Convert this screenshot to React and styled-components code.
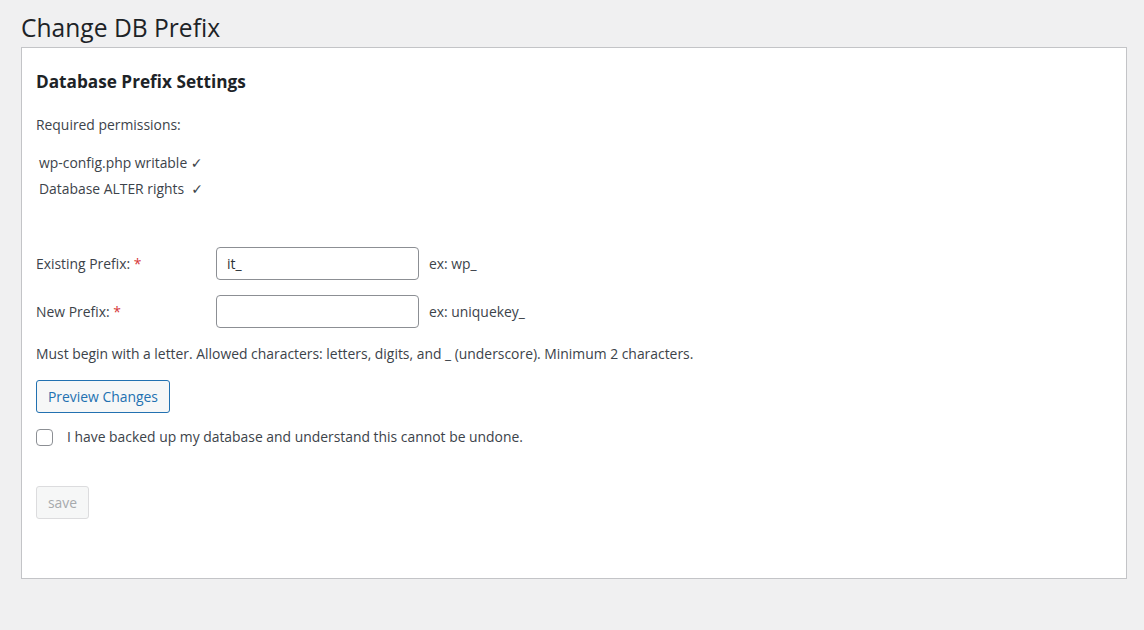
import React, { useState } from "react";
import styled, { createGlobalStyle } from "styled-components";

const GlobalStyle = createGlobalStyle`
  html, body {
    margin: 0;
    padding: 0;
    background: #f0f0f1;
  }
  body {
    font-family: "Open Sans", "Noto Sans", "DejaVu Sans", sans-serif;
    font-size: 13.9px;
    color: #3c434a;
  }
`;

const Wrap = styled.div`
  padding: 13px 17px 0 21px;
`;

const PageTitle = styled.h1`
  margin: 0 0 4px;
  font-size: 24.6px;
  font-weight: 400;
  line-height: 30px;
  color: #1d2327;
`;

const Panel = styled.div`
  background: #fff;
  border: 1px solid #c3c4c7;
  padding: 0 14px 59px;
`;

const SectionTitle = styled.h2`
  margin: 22px 0 0;
  font-size: 17.2px;
  font-weight: 700;
  line-height: 24px;
  color: #1d2327;
`;

const Text = styled.p`
  margin: ${({ $top }) => $top || 0}px 0 0;
  line-height: 20px;
`;

const PermList = styled.ul`
  list-style: none;
  margin: 15px 0 0;
  padding: 0 0 0 3px;
`;

const PermItem = styled.li`
  line-height: 26px;
  white-space: pre;
`;

const Check = styled.span`
  font-family: "DejaVu Sans", sans-serif;
  font-size: 14px;
`;

const FormRow = styled.div`
  display: flex;
  align-items: center;
  margin-top: ${({ $top }) => $top}px;
`;

const Label = styled.label`
  width: 180px;
  flex: none;
`;

const Required = styled.span`
  color: #d63638;
`;

const Input = styled.input`
  box-sizing: border-box;
  width: 203px;
  height: 33px;
  margin: 0 10px 0 0;
  padding: 0 10px;
  border: 1px solid #8c8f94;
  border-radius: 4px;
  background: #fff;
  font-family: inherit;
  font-size: 14px;
  color: #2c3338;
  outline: none;
`;

const Button = styled.button`
  display: block;
  box-sizing: border-box;
  height: 33px;
  margin-top: ${({ $top }) => $top}px;
  padding: 0 11px;
  border-radius: 3px;
  font-family: inherit;
  font-size: 13.9px;
  cursor: pointer;
  background: #f6f7f7;
  border: 1px solid ${({ disabled }) => (disabled ? "#dcdcde" : "#2271b1")};
  color: ${({ disabled }) => (disabled ? "#a7aaad" : "#2271b1")};
`;

const CheckRow = styled.label`
  display: flex;
  align-items: center;
  margin-top: 14px;
  line-height: 20px;
`;

const Box = styled.input`
  appearance: none;
  box-sizing: border-box;
  width: 17px;
  height: 17px;
  margin: 0 14px 0 0;
  border: 1px solid #8c8f94;
  border-radius: 4px;
  background: #fff;
`;

export default function App() {
  const [existing, setExisting] = useState("it_");
  const [next, setNext] = useState("");

  return (
    <>
      <GlobalStyle />
      <Wrap>
        <PageTitle>Change DB Prefix</PageTitle>
        <Panel>
          <SectionTitle>Database Prefix Settings</SectionTitle>
          <Text $top={21}>Required permissions:</Text>
          <PermList>
            <PermItem>
              wp-config.php writable <Check>✓</Check>
            </PermItem>
            <PermItem>
              Database ALTER rights  <Check>✓</Check>
            </PermItem>
          </PermList>

          <FormRow $top={45}>
            <Label>
              Existing Prefix: <Required>*</Required>
            </Label>
            <Input value={existing} onChange={(e) => setExisting(e.target.value)} />
            <span>ex: wp_</span>
          </FormRow>
          <FormRow $top={15}>
            <Label>
              New Prefix: <Required>*</Required>
            </Label>
            <Input value={next} onChange={(e) => setNext(e.target.value)} />
            <span>ex: uniquekey_</span>
          </FormRow>

          <Text $top={16}>
            Must begin with a letter. Allowed characters: letters, digits, and _
            (underscore). Minimum 2 characters.
          </Text>

          <Button $top={16}>Preview Changes</Button>

          <CheckRow>
            <Box type="checkbox" />
            I have backed up my database and understand this cannot be undone.
          </CheckRow>

          <Button $top={39} disabled>
            save
          </Button>
        </Panel>
      </Wrap>
    </>
  );
}
